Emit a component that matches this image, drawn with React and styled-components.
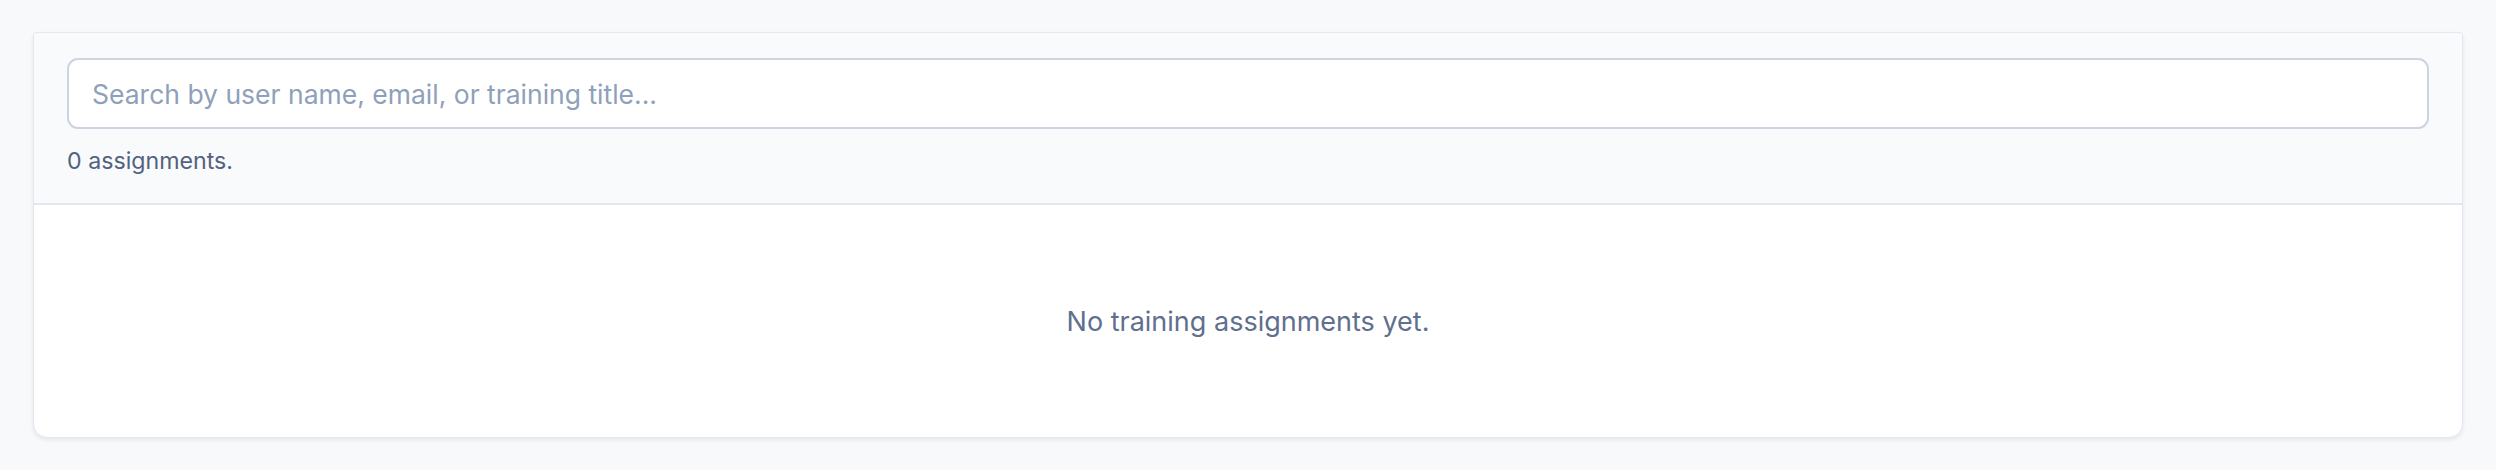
import React from "react";
import styled, { createGlobalStyle } from "styled-components";

const GlobalStyle = createGlobalStyle`
  body {
    margin: 0;
    background: #f8f9fb;
    font-family: "Inter", "Noto Sans", sans-serif;
  }
`;

const Page = styled.div`
  padding: 32px 33px;
`;

const Card = styled.div`
  background: #ffffff;
  border: 1px solid #e2e8f0;
  border-radius: 4px 4px 14px 14px;
  box-shadow: 0 2px 4px rgba(15, 23, 42, 0.08);
  overflow: hidden;
`;

const Toolbar = styled.div`
  background: #f8fafc;
  border-bottom: 2px solid #e2e8f0;
  padding: 25px 33px 28px;
  display: flex;
  flex-direction: column;
  gap: 18px;
`;

const SearchInput = styled.input`
  box-sizing: border-box;
  width: 100%;
  height: 71px;
  padding: 0 23px;
  border: 2px solid #cbd5e1;
  border-radius: 11px;
  background: #ffffff;
  font-family: inherit;
  font-size: 26.5px;
  color: #334155;
  outline: none;

  &::placeholder {
    color: #8fa0bb;
  }
`;

const Count = styled.div`
  font-size: 23.2px;
  color: #52627f;
`;

const Empty = styled.div`
  height: 232px;
  display: flex;
  align-items: center;
  justify-content: center;
  font-size: 27px;
  color: #5f6f8f;
`;

export default function App() {
  return (
    <>
      <GlobalStyle />
      <Page>
        <Card>
          <Toolbar>
            <SearchInput placeholder="Search by user name, email, or training title..." />
            <Count>0 assignments.</Count>
          </Toolbar>
          <Empty>No training assignments yet.</Empty>
        </Card>
      </Page>
    </>
  );
}
